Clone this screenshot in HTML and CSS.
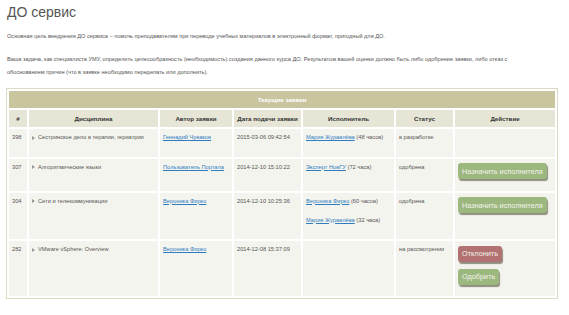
FILE: index.html
```html
<!DOCTYPE html>
<html lang="ru">
	<head>
		<meta charset="UTF-8" />
		<title>ДО сервис</title>
		<link rel="stylesheet" href="styles.css">
	</head>
	<body>
		<h1 class="title">ДО сервис</h1>
		<p class="txt">Основная цель внедрения ДО сервиса – помочь преподавателям при переводе учебных материалов в электронный формат, пригодный для ДО.</p>
		<p class="txt">Ваша задача, как специалиста УМУ, определить целесообразность (необходимость) создания данного курса ДО. Результатом вашей оценки должно быть либо одобрение заявки, либо отказ с обоснованием причин (что в заявке необходимо переделать или дополнить).</p>

		<table class="tbl">
			<tr>
				<th class="cap" colspan="7">Текущие заявки</th>
			</tr>
			<tr class="head">
				<th class="c-num">#</th>
				<th class="c-disc">Дисциплина</th>
				<th class="c-auth">Автор заявки</th>
				<th class="c-date">Дата подачи заявки</th>
				<th class="c-exec">Исполнитель</th>
				<th class="c-stat">Статус</th>
				<th class="c-act">Действие</th>
			</tr>
			<tr>
				<td>398</td>
				<td><span class="arr"></span>Сестринское дело в терапии, гериатрии</td>
				<td><a href="#">Геннадий Чуваков</a></td>
				<td>2015-03-06 09:42:54</td>
				<td><p class="ex"><a href="#">Мария Журавлёва</a> (48 часов)</p></td>
				<td>в разработке</td>
				<td></td>
			</tr>
			<tr>
				<td>307</td>
				<td><span class="arr"></span>Алгоритмические языки</td>
				<td><a href="#">Пользователь Портала</a></td>
				<td>2014-12-10 15:10:22</td>
				<td><p class="ex"><a href="#">Эксперт НовГУ</a> (72 часа)</p></td>
				<td>одобрена</td>
				<td><button class="btn green">Назначить исполнителя</button></td>
			</tr>
			<tr>
				<td>304</td>
				<td><span class="arr"></span>Сети и телекоммуникации</td>
				<td><a href="#">Вероника Фирко</a></td>
				<td>2014-12-10 10:25:36</td>
				<td>
					<p class="ex"><a href="#">Вероника Фирко</a> (60 часов)</p>
					<p class="ex"><a href="#">Мария Журавлёва</a> (32 часа)</p>
				</td>
				<td>одобрена</td>
				<td><button class="btn green">Назначить исполнителя</button></td>
			</tr>
			<tr>
				<td>282</td>
				<td><span class="arr"></span>VMware vSphere: Overview</td>
				<td><a href="#">Вероника Фирко</a></td>
				<td>2014-12-08 15:37:09</td>
				<td></td>
				<td>на рассмотрении</td>
				<td>
					<button class="btn red">Отклонить</button>
					<button class="btn green">Одобрить</button>
				</td>
			</tr>
		</table>
	</body>
</html>
```

FILE: styles.css
```css
* {
	box-sizing: border-box;
	margin: 0;
	padding: 0;
}

body {
	font-family: "Liberation Sans", Arial, sans-serif;
	color: #555;
	background: #fff;
	padding: 0 7px;
	width: 569px;
}

.title {
	font-size: 14px;
	font-weight: normal;
	line-height: 16px;
	color: #555;
	margin-top: 4px;
}

.txt {
	font-size: 5.6px;
	line-height: 13px;
	margin-top: 10px;
	max-width: 520px;
}

.tbl {
	margin-top: 9px;
	margin-left: -1px;
	width: 552px;
	border: 1px solid #dddac4;
	border-spacing: 2px;
	background: #fff;
	font-size: 5.7px;
	line-height: 9px;
}

.cap {
	height: 17px;
	background: #c9c69f;
	color: #fff;
	font-size: 6.2px;
	font-weight: bold;
	text-align: center;
}

.head th {
	height: 17px;
	background: #e6e5d6;
	color: #333;
	font-size: 6.2px;
	font-weight: bold;
	text-align: center;
}

.c-num { width: 18px; }
.c-disc { width: 129px; }
.c-auth { width: 72px; }
.c-date { width: 67px; }
.c-exec { width: 91px; }
.c-stat { width: 57px; }

td {
	background: #f4f4ee;
	vertical-align: top;
	padding: 4px 3px 4.5px 3px;
	white-space: nowrap;
}

td a {
	color: #2f7cc1;
}

.ex {
	margin-bottom: 10px;
}

.arr {
	display: inline-block;
	width: 0;
	height: 0;
	border-left: 3.5px solid #999;
	border-top: 2.5px solid transparent;
	border-bottom: 2.5px solid transparent;
	margin-right: 3px;
	vertical-align: -0.5px;
}

.btn {
	display: block;
	height: 16px;
	padding: 0 4px;
	margin: 0.5px 0 7px 0;
	border: none;
	border-radius: 3px;
	font-family: "Liberation Sans", Arial, sans-serif;
	font-size: 7.3px;
	color: #f2f4ee;
	box-shadow: 1px 2px 1px rgba(60, 60, 40, 0.55);
}

.green {
	background: #9db87e;
}

.red {
	background: #b27272;
}
```
